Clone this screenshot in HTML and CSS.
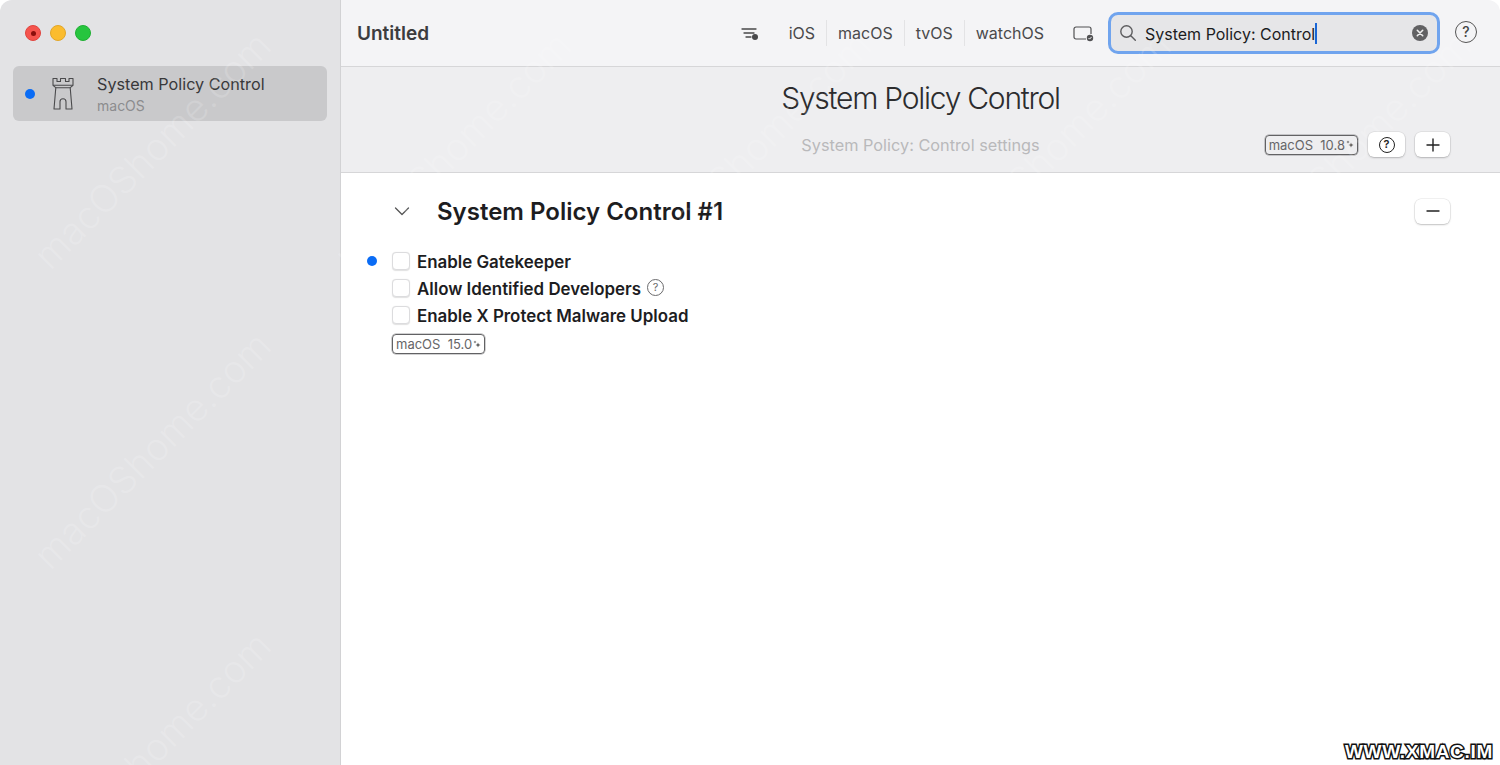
FILE: index.html
```html
<!DOCTYPE html>
<html lang="en">
<head>
<meta charset="utf-8">
<title>Untitled</title>
<link rel="stylesheet" href="styles.css">
</head>
<body>
<div class="window">
  <aside class="sidebar">
    <div class="traffic">
      <span class="light red"><i></i></span>
      <span class="light yellow"></span>
      <span class="light green"></span>
    </div>
    <div class="side-item">
      <span class="dot"></span>
      <svg class="castle" width="24" height="33" viewBox="0 0 24 33" fill="none" stroke="#4a4a4c" stroke-width="1.1" stroke-linejoin="round">
        <path d="M2 1.5h4v3h3.5v-3h5v3H18v-3h4v6.8l-2.8 2.4 1.8 21.3h-6v-7.2a3 3 0 0 0-6 0v7.2H3L4.8 10.7 2 8.3z"/>
        <path d="M2 8.3h20M4.8 10.7h14.4"/>
      </svg>
      <div class="side-text">
        <div class="side-title">System Policy Control</div>
        <div class="side-sub">macOS</div>
      </div>
    </div>
  </aside>
  <main class="main">
    <header class="toolbar">
      <h1 class="doc-title">Untitled</h1>
      <svg class="filter" width="18" height="14" viewBox="0 0 18 14" fill="none" stroke="#48484a" stroke-width="1.3" stroke-linecap="round">
        <path d="M1 2h14M3 6h10M5 10h5"/>
        <circle cx="14" cy="10" r="3" fill="#48484a" stroke="none"/>
      </svg>
      <nav class="platforms">
        <span class="platform">iOS</span>
        <span class="platform">macOS</span>
        <span class="platform">tvOS</span>
        <span class="platform">watchOS</span>
      </nav>
      <svg class="device" width="22" height="16" viewBox="0 0 22 16" fill="none" stroke="#505052" stroke-width="1.2">
        <path d="M13 13H3a2 2 0 0 1-2-2V3a2 2 0 0 1 2-2h13a2 2 0 0 1 2 2v5"/>
        <circle cx="17" cy="12" r="3.2" fill="#505052" stroke="none"/>
        <path d="M15.5 12l1.1 1.1 2-2.2" stroke="#f4f4f6" stroke-width="1"/>
      </svg>
      <div class="search">
        <svg width="18" height="18" viewBox="0 0 18 18" fill="none" stroke="#5c5c5e" stroke-width="1.4" stroke-linecap="round">
          <circle cx="7.5" cy="7.5" r="5.7"/>
          <path d="M11.8 11.8L16.3 16.3"/>
        </svg>
        <span class="search-text">System Policy: Control</span><span class="caret"></span>
        <svg class="clear" width="16" height="16" viewBox="0 0 16 16">
          <circle cx="8" cy="8" r="8" fill="#616163"/>
          <path d="M5.3 5.3l5.4 5.4M10.7 5.3l-5.4 5.4" stroke="#eee" stroke-width="1.6" stroke-linecap="round"/>
        </svg>
      </div>
      <span class="help-circle">?</span>
    </header>
    <section class="page-head">
      <h2 class="page-title">System Policy Control</h2>
      <div class="page-row">
        <span></span>
        <div class="page-sub">System Policy: Control settings</div>
        <div class="page-actions">
          <span class="badge">macOS&nbsp;&nbsp;10.8<svg class="spark" width="8" height="9" viewBox="0 0 8 9" fill="#555"><path d="M5 2.5l.7 1.8L7.5 5l-1.8.7L5 7.5l-.7-1.8L2.5 5l1.8-.7zM2 .5l.4 1.1 1.1.4-1.1.4L2 3.5l-.4-1.1L.5 2l1.1-.4z"/></svg></span>
          <button class="btn btn-wide" type="button"><span class="btn-q">?</span></button>
          <button class="btn" type="button">
            <svg width="14" height="14" viewBox="0 0 14 14" stroke="#222" stroke-width="1.4" stroke-linecap="round"><path d="M7 1v12M1 7h12"/></svg>
          </button>
        </div>
      </div>
    </section>
    <section class="content">
      <div class="sec-head">
        <svg class="chev" width="16" height="10" viewBox="0 0 16 10" fill="none" stroke="#555" stroke-width="1.3" stroke-linecap="round" stroke-linejoin="round"><path d="M1.5 2L8 8.5 14.5 2"/></svg>
        <h3 class="sec-title">System Policy Control #1</h3>
        <button class="btn" type="button">
          <svg width="14" height="14" viewBox="0 0 14 14" stroke="#222" stroke-width="1.4" stroke-linecap="round"><path d="M1 7h12"/></svg>
        </button>
      </div>
      <ul class="options">
        <li class="option"><span class="opt-dot"></span><span class="check"></span><span class="opt-label">Enable Gatekeeper</span></li>
        <li class="option"><span class="opt-spacer"></span><span class="check"></span><span class="opt-label">Allow Identified Developers</span><span class="mini-help">?</span></li>
        <li class="option"><span class="opt-spacer"></span><span class="check"></span><span class="opt-label">Enable X Protect Malware Upload</span></li>
      </ul>
      <span class="badge badge-opt">macOS&nbsp;&nbsp;15.0<svg class="spark" width="8" height="9" viewBox="0 0 8 9" fill="#555"><path d="M5 2.5l.7 1.8L7.5 5l-1.8.7L5 7.5l-.7-1.8L2.5 5l1.8-.7zM2 .5l.4 1.1 1.1.4-1.1.4L2 3.5l-.4-1.1L.5 2l1.1-.4z"/></svg></span>
    </section>
  </main>
</div>
<div class="marks" aria-hidden="true">
  <span class="mark m1">macOShome.com</span>
  <span class="mark m2">macOShome.com</span>
  <span class="mark m3">macOShome.com</span>
  <span class="mark m4">macOShome.com</span>
  <span class="mark m7">macOShome.com</span>
  <span class="mark m9">macOShome.com</span>
  <span class="mark m11">macOShome.com</span>
</div>
<div class="stamp">WWW.XMAC.IM</div>
</body>
</html>
```
FILE: styles.css
```css
* { box-sizing: border-box; }
html, body { margin: 0; height: 100%; background: #fff; overflow: hidden; }
body { font-family: Inter, "Noto Sans", "Liberation Sans", sans-serif; color: #1d1d1f; }
h1, h2, h3, ul { margin: 0; padding: 0; font: inherit; list-style: none; }

.window { display: flex; width: 1500px; height: 765px; background: #fff; border-radius: 12px 12px 0 0; overflow: hidden; }

.sidebar { width: 341px; flex: none; background: #e3e3e5; border-right: 1px solid #d2d2d4; padding: 0 13px; }
.traffic { display: flex; gap: 9px; padding: 25px 0 0 12px; height: 66px; }
.light { width: 16px; height: 16px; border-radius: 50%; display: flex; align-items: center; justify-content: center; }
.light i { width: 5px; height: 5px; border-radius: 50%; background: #8a0f0c; }
.red { background: #f5544d; border: 1px solid #e0443e; }
.yellow { background: #fbbc2e; border: 1px solid #e2a628; }
.green { background: #27c53f; border: 1px solid #1fb033; }

.side-item { display: flex; align-items: center; height: 55px; width: 314px; background: #c9c9cb; border-radius: 6px; padding-left: 12px; }
.dot { width: 10px; height: 10px; border-radius: 50%; background: #0a6cf5; flex: none; }
.castle { margin-left: 16px; flex: none; }
.side-text { margin-left: 22px; padding-top: 2px; }
.side-title { font-size: 16.2px; line-height: 21px; color: #38383a; }
.side-sub { font-size: 14px; line-height: 19px; color: #8c8c8e; margin-top: 1px; }

.main { flex: 1; display: flex; flex-direction: column; min-width: 0; }

.toolbar { height: 67px; flex: none; display: flex; align-items: center; background: #f4f4f6; border-bottom: 1px solid #d6d6d8; padding: 0 23px 0 16px; }
.doc-title { font-size: 19px; font-weight: 600; color: #3c3c3e; margin-right: auto; }
.filter { flex: none; margin-top: 2px; }
.platforms { display: flex; margin-left: 19px; }
.platform { font-size: 16px; line-height: 26px; padding: 0 11px; color: #4a4a4c; border-left: 1px solid #e3e3e5; }
.platform:first-child { border-left: 0; }
.device { flex: none; margin-left: 18px; margin-top: 1px; }
.search { display: flex; align-items: center; width: 332px; height: 42px; margin-left: 13px; padding: 0 9px 0 8px; background: #e6e6e8; border: 3px solid #70a4ee; border-radius: 10px; }
.search > svg:first-child { flex: none; }
.search-text { font-size: 16px; margin-left: 8px; color: #1c1c1e; white-space: nowrap; margin-top: 1px; }
.caret { width: 2px; height: 21px; background: #1a66d6; flex: none; }
.clear { margin-left: auto; flex: none; }
.help-circle { width: 22px; height: 22px; margin-left: 15px; border: 1.5px solid #555; border-radius: 50%; font-size: 14px; font-weight: 500; line-height: 19px; text-align: center; color: #444; flex: none; margin-top: -2px; }

.page-head { height: 106px; flex: none; background: #eeeef0; border-bottom: 1px solid #d6d6d8; padding: 12px 50px 0 0; }
.page-title { font-size: 30px; font-weight: 300; line-height: 38px; letter-spacing: -1.25px; text-align: center; padding-left: 50px; color: #2c2c2e; }
.page-row { display: grid; grid-template-columns: 1fr auto 1fr; align-items: center; margin-top: 15px; padding-left: 50px; }
.page-sub { font-size: 16.3px; color: #b9b9bb; }
.page-actions { display: flex; align-items: center; justify-content: flex-end; gap: 10px; }

.badge { display: inline-flex; align-items: center; height: 20px; padding: 0 3px; border: 1px solid #626264; border-radius: 4px; box-shadow: 0 0 0 .5px rgba(90,90,92,.55); font-size: 13px; color: #666668; white-space: nowrap; }
.spark { margin-left: 1px; }
.btn { width: 35px; height: 25px; padding: 0; display: flex; align-items: center; justify-content: center; background: #fff; border: 0; border-radius: 6px; box-shadow: 0 0 0 .5px rgba(0,0,0,.1), 0 1px 2px rgba(0,0,0,.2); font: inherit; flex: none; }
.btn-wide { width: 37px; }
.btn-q { width: 16px; height: 16px; border: 1.4px solid #222; border-radius: 50%; font-size: 11px; font-weight: 600; line-height: 13px; text-align: center; color: #222; }

.content { flex: 1; background: #fff; padding: 25px 50px 0 26px; }
.sec-head { display: flex; align-items: center; height: 26px; }
.chev { margin-left: 27px; flex: none; }
.sec-title { font-size: 24px; font-weight: 600; margin-left: 27px; margin-right: auto; color: #1d1d1f; }
.options { margin-top: 23px; }
.option { display: flex; align-items: center; height: 27px; }
.opt-dot { width: 10px; height: 10px; border-radius: 50%; background: #0a6cf5; flex: none; }
.opt-spacer { width: 10px; flex: none; }
.check { width: 18px; height: 18px; margin-left: 15px; background: #fff; border-radius: 4px; border: 1px solid #dcdcde; box-shadow: 0 .5px 1px rgba(0,0,0,.12); flex: none; }
.opt-label { font-size: 16.9px; font-weight: 600; margin-left: 7px; padding-top: 2px; color: #1d1d1f; white-space: nowrap; }
.mini-help { width: 17px; height: 17px; margin-left: 6px; border: 1px solid #6a6a6c; border-radius: 50%; font-size: 11px; line-height: 15px; text-align: center; color: #6a6a6c; }
.badge-opt { margin: 6px 0 0 25px; }

.marks { position: absolute; inset: 0; pointer-events: none; overflow: hidden; }
.mark { position: absolute; width: 340px; text-align: center; font-size: 38px; font-weight: 300; line-height: 44px; color: rgba(255,255,255,.16); transform: rotate(-45deg); white-space: nowrap; }
.m1 { left: -18px; top: 128px; }
.m2 { left: -18px; top: 428px; }
.m3 { left: -18px; top: 728px; }
.m4 { left: 282px; top: 128px; }
.m7 { left: 582px; top: 128px; }
.m9 { left: 882px; top: 128px; }
.m11 { left: 1182px; top: 128px; }

.stamp { position: absolute; right: 7px; bottom: 2px; font-family: "Liberation Sans", Arial, sans-serif; font-size: 19px; font-weight: 700; line-height: 22px; color: #fff; -webkit-text-stroke: 3px #111; paint-order: stroke fill; letter-spacing: .7px; }
```
